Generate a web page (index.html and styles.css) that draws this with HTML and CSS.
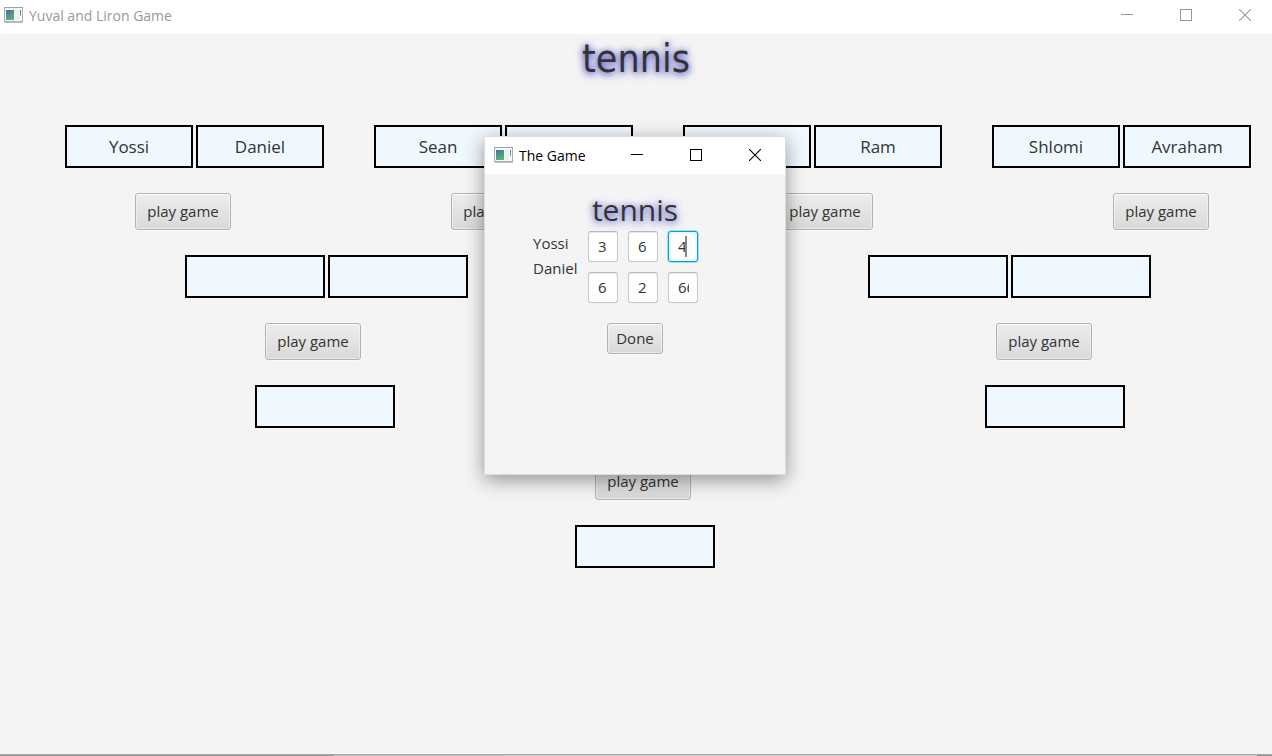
FILE: index.html
```html
<!DOCTYPE html>
<html lang="en">
<head>
<meta charset="utf-8">
<title>Yuval and Liron Game</title>
<link rel="stylesheet" href="styles.css">
</head>
<body>
<svg class="defs" width="0" height="0" aria-hidden="true">
  <defs>
    <linearGradient id="pane" x1="0" y1="0" x2="0.4" y2="1">
      <stop offset="0" stop-color="#44739f"/><stop offset="1" stop-color="#57b078"/>
    </linearGradient>
    <linearGradient id="slit" x1="0" y1="0" x2="0" y2="1">
      <stop offset="0" stop-color="#4878ae"/><stop offset="1" stop-color="#5cb582"/>
    </linearGradient>
    <symbol id="app" viewBox="0 0 19 16">
      <rect x="0.5" y="0.5" width="18" height="14" fill="#f6f7f9" stroke="#a9aeb6"/>
      <path d="M0 .5h19M1 15.5h18" stroke="#9299a3" stroke-opacity=".6"/>
      <rect x="2" y="3" width="8" height="10" fill="url(#pane)"/>
      <rect x="11" y="3" width="4" height="10" fill="#eceef1"/>
      <rect x="16" y="3" width="1" height="6" fill="url(#slit)"/>
    </symbol>
    <symbol id="min" viewBox="0 0 12 12"><path d="M0 5.5h12" stroke="currentColor"/></symbol>
    <symbol id="max" viewBox="0 0 12 12"><rect x=".5" y=".5" width="11" height="11" fill="none" stroke="currentColor"/></symbol>
    <symbol id="close" viewBox="0 0 12 12"><path d="M0 0l12 12M12 0L0 12" stroke="currentColor" stroke-width="1.1"/></symbol>
  </defs>
</svg>

<div class="window">
  <header class="titlebar inactive">
    <svg class="app-icon"><use href="#app"/></svg>
    <span class="caption">Yuval and Liron Game</span>
    <button class="winbtn" aria-label="Minimize"><svg><use href="#min"/></svg></button>
    <button class="winbtn" aria-label="Maximize"><svg><use href="#max"/></svg></button>
    <button class="winbtn" aria-label="Close"><svg><use href="#close"/></svg></button>
  </header>

  <main class="board">
    <h1 class="sport">tennis</h1>
    <div class="row first">
      <div class="pair"><div class="slot">Yossi</div><div class="slot">Daniel</div></div>
      <div class="pair"><div class="slot">Sean</div><div class="slot"></div></div>
      <div class="pair"><div class="slot"></div><div class="slot">Ram</div></div>
      <div class="pair"><div class="slot">Shlomi</div><div class="slot">Avraham</div></div>
    </div>
    <div class="row quarter-buttons">
      <button class="btn play">play game</button>
      <button class="btn play">play game</button>
      <button class="btn play">play game</button>
      <button class="btn play">play game</button>
    </div>
    <div class="row semi">
      <div class="pair"><div class="slot wide"></div><div class="slot wide"></div></div>
      <div class="pair"><div class="slot wide"></div><div class="slot wide"></div></div>
    </div>
    <div class="row semi-buttons">
      <button class="btn play">play game</button>
      <button class="btn play">play game</button>
    </div>
    <div class="row finalists">
      <div class="slot wide"></div>
      <div class="slot wide"></div>
    </div>
    <div class="row final-button">
      <button class="btn play">play game</button>
    </div>
    <div class="row winner">
      <div class="slot wide"></div>
    </div>
  </main>
  <div class="edge"><span class="edge-dark"></span><span class="edge-mid"></span><span class="edge-light"></span><span class="edge-end"></span></div>
</div>

<section class="dialog" role="dialog" aria-labelledby="dialog-title">
  <header class="titlebar">
    <svg class="app-icon"><use href="#app"/></svg>
    <span class="caption" id="dialog-title">The Game</span>
    <button class="winbtn" aria-label="Minimize"><svg><use href="#min"/></svg></button>
    <button class="winbtn" aria-label="Maximize"><svg><use href="#max"/></svg></button>
    <button class="winbtn" aria-label="Close"><svg><use href="#close"/></svg></button>
  </header>
  <form class="match">
    <h2 class="match-title">tennis</h2>
    <div class="sets">
      <div class="names">
        <label for="a1">Yossi</label>
        <label for="b1">Daniel</label>
      </div>
      <div class="scores">
        <input class="score" id="a1" value="3">
        <input class="score" value="6" aria-label="Yossi, set 2">
        <span class="active"><input class="score focused" value="4" aria-label="Yossi, set 3"><span class="caret"></span></span>
        <input class="score" id="b1" value="6">
        <input class="score" value="2" aria-label="Daniel, set 2">
        <input class="score" value="66" aria-label="Daniel, set 3">
      </div>
    </div>
    <button class="btn done" type="button">Done</button>
  </form>
</section>
</body>
</html>
```

FILE: styles.css
```css
* { box-sizing: border-box; }

body {
  margin: 0;
  font-family: "Open Sans", "Noto Sans", sans-serif;
  font-size: 15px;
  line-height: 20px;
  color: #333;
  background: #f4f4f4;
}

button, input { font: inherit; color: inherit; margin: 0; }
.defs { position: absolute; }

.window {
  min-height: 100vh;
  display: flex;
  flex-direction: column;
  overflow: hidden;
}

/* Title bars */
.titlebar {
  display: flex;
  align-items: center;
  height: 37px;
  padding: 0 1px 2px 9px;
  background: #fff;
  color: #000;
  font-size: 14px;
}
.titlebar.inactive {
  height: 34px;
  padding: 0 0 4px 4px;
  margin-right: -2px;
  color: #999;
}
.app-icon { width: 19px; height: 16px; margin-right: 6px; flex: none; }
.caption { flex: 1; padding-top: 2px; white-space: nowrap; }
.winbtn {
  display: flex;
  align-items: center;
  justify-content: center;
  width: 59px;
  height: 28px;
  padding: 0;
  border: 0;
  background: none;
}
.winbtn svg { width: 12px; height: 12px; overflow: visible; }

/* Tournament tree */
.board {
  flex: 1;
  display: flex;
  flex-direction: column;
  gap: 25px;
}
.sport {
  margin: 0 0 16px;
  height: 50px;
  line-height: 50px;
  font-family: "DejaVu Sans Condensed", "Noto Sans", sans-serif;
  font-size: 39px;
  font-weight: 400;
  text-align: center;
  text-shadow: 0 1px 6px #5c5cc4, 0 2px 10px #7878d0;
}
.row { display: flex; justify-content: center; }
.pair { display: flex; gap: 3px; }
.slot {
  width: 128px;
  height: 43px;
  border: 2px solid #000;
  background: #f0f8ff;
  font-size: 17px;
  line-height: 39px;
  text-align: center;
  flex: none;
}
.slot.wide { width: 140px; }

.first { gap: 50px; padding-left: 44px; }
.quarter-buttons {
  display: grid;
  grid-template-columns: 316px 326px 336px 96px;
  padding-left: 72px;
}
.semi { gap: 400px; padding-left: 64px; }
.semi-buttons { gap: 635px; padding-left: 85px; }
.finalists { gap: 590px; padding-left: 108px; }
.final-button { padding: 10px 0 0 14px; }
.winner { padding-left: 18px; }

.btn {
  border: 1px solid #b3b3b3;
  border-radius: 3px;
  background: linear-gradient(#ededed, #d9d9d9);
  box-shadow: inset 0 0 0 1px #ffffff66, inset 0 1px 0 #fafafa, 0 1px 0 #fafafa;
  padding: 0 0 2px;
  white-space: nowrap;
}
.play { width: 96px; height: 37px; }

/* Strip of the desktop below the window */
.edge { display: flex; height: 2px; border-top: 1px solid #a6a6a6; }
.edge-dark { width: 334px; background: #999; }
.edge-mid { width: 170px; background: #bfbfbf; }
.edge-light { flex: 1; background: #ccc; }
.edge-end { width: 15px; background: #949494; }

/* Match dialog */
.dialog {
  position: absolute;
  top: 136px;
  left: calc(50% - 152px);
  width: 302px;
  min-height: 339px;
  border: 1px solid #dcdcdc;
  background: #f4f4f4;
  box-shadow: 0 5px 18px #00000066;
}
.match {
  display: flex;
  flex-direction: column;
  align-items: center;
  padding-top: 16px;
}
.match-title {
  margin: 0;
  height: 41px;
  line-height: 39px;
  font-size: 30px;
  font-weight: 400;
  text-shadow: 0 1px 6px #7878d0, 0 2px 10px #8c8cd8;
}
.sets {
  display: flex;
  gap: 10px;
  align-self: flex-start;
  padding-left: 48px;
}
.names {
  display: flex;
  flex-direction: column;
  gap: 5px;
  width: 45px;
  padding-top: 2px;
}
.scores {
  display: grid;
  grid-template-columns: repeat(3, 30px);
  gap: 10px;
}
.score {
  display: block;
  width: 30px;
  height: 31px;
  padding: 0 8px 2px 9px;
  border: 1px solid #c8c8c8;
  border-top-color: #b8b8b8;
  border-radius: 3px;
  background: #fff;
  box-shadow: inset 0 1px 1px #e8e8e8;
  outline: 0;
}
.focused {
  border-color: #039ed3;
  box-shadow: 0 0 0 1px #a6dcef, inset 0 0 0 2px #eaf7fc;
}
.active { position: relative; }
.caret {
  position: absolute;
  top: 5px;
  right: 11px;
  width: 2px;
  height: 21px;
  background: #858585;
}
.done { width: 56px; height: 31px; margin-top: 20px; }
```
